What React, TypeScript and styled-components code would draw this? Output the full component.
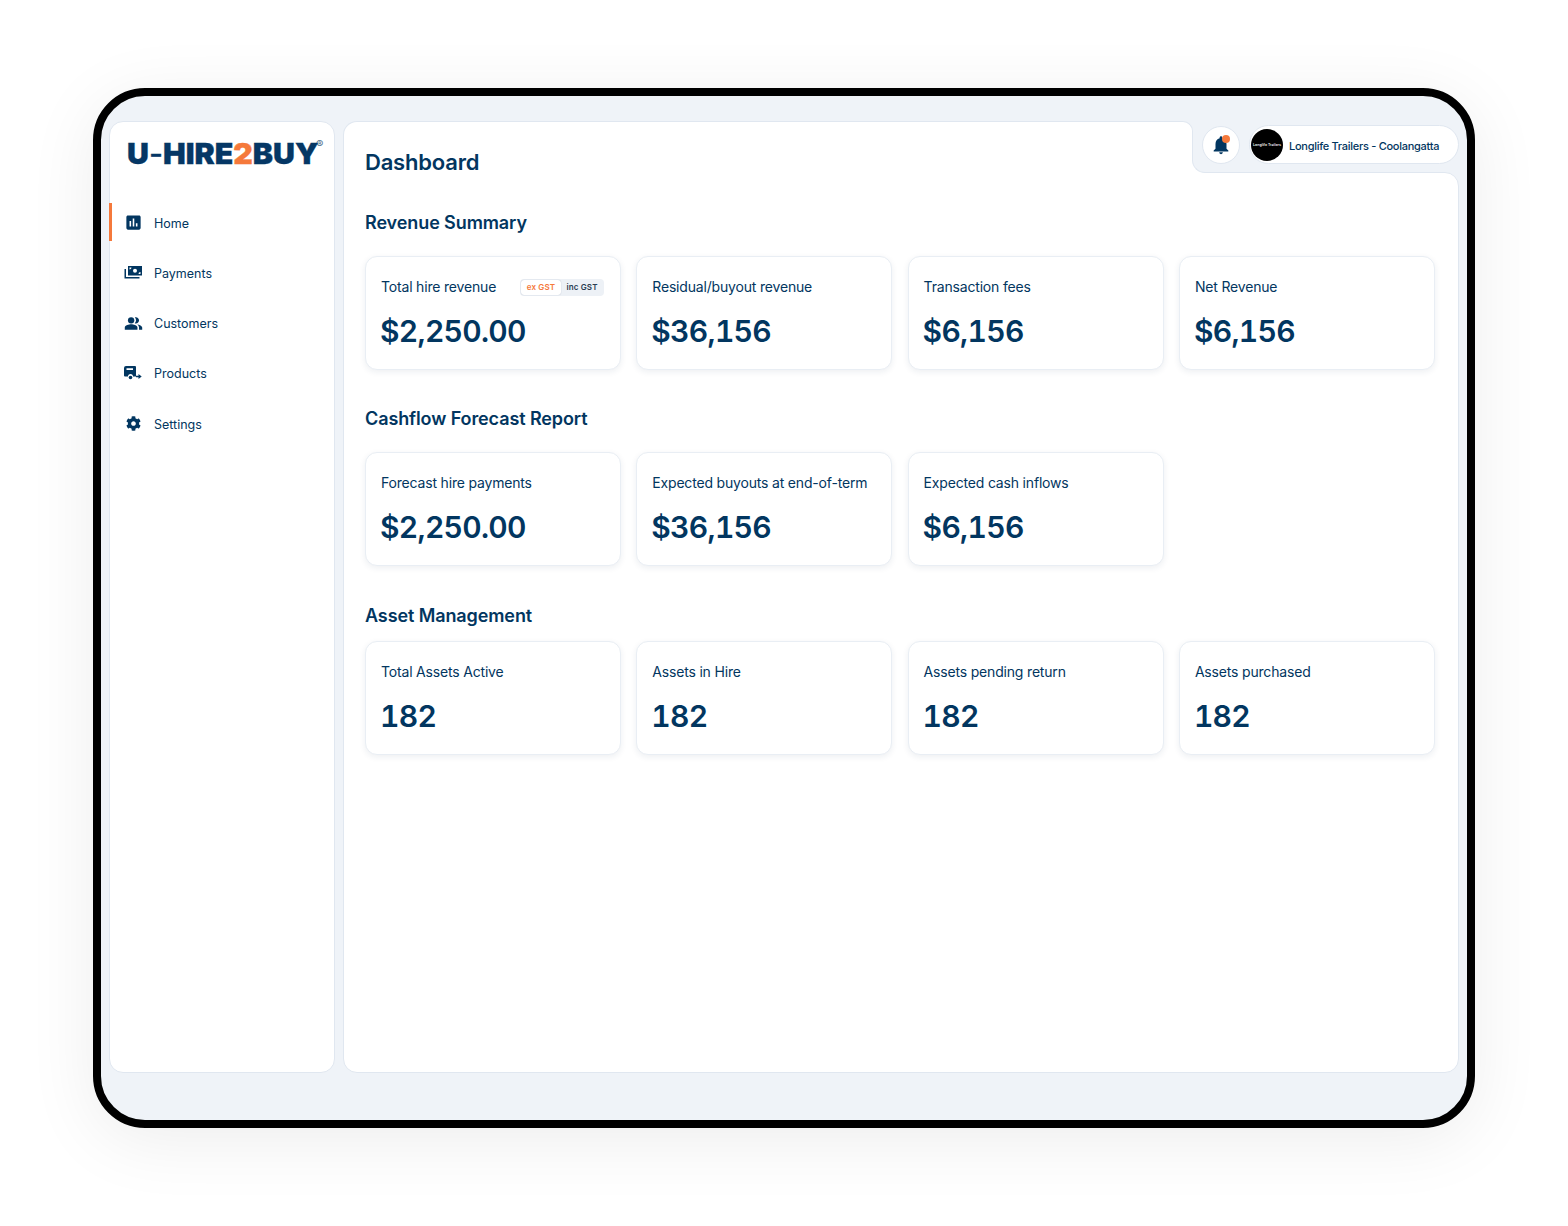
import styled, { createGlobalStyle } from 'styled-components';
import { MdAssessment, MdPeopleAlt, MdNotifications } from 'react-icons/md';
import { FaCog } from 'react-icons/fa';

const navy = '#023660';
const orange = '#f5793b';
const frameBg = '#eff3f8';
const line = '#e0e7f0';

const GlobalStyle = createGlobalStyle`
  html, body { margin: 0; padding: 0; background: #fff; }
  body { font-family: Inter, "Liberation Sans", sans-serif; color: ${navy}; }
  * { box-sizing: border-box; }
`;

const Page = styled.div`
  width: 1568px;
  height: 1226px;
  padding-top: 88px;
  overflow: hidden;
`;

const Frame = styled.div`
  width: 1382px;
  height: 1040px;
  margin: 0 auto;
  border: 8px solid #000;
  border-radius: 52px;
  background: ${frameBg};
  padding: 25px 8px 47px;
  display: flex;
  gap: 8px;
  box-shadow: 0 12px 70px rgba(0, 0, 0, 0.075);
`;

const Sidebar = styled.aside`
  width: 226px;
  background: #fff;
  border: 1px solid ${line};
  border-radius: 14px;
  flex: none;
`;

const Logo = styled.div`
  height: 81px;
  padding: 13px 0 0 17px;
  display: flex;
  align-items: flex-start;
  font-weight: 900;
  font-size: 29px;
  line-height: 38px;
  color: #053765;
  -webkit-text-stroke: 0.3px #053765;
  white-space: nowrap;
`;

const LogoWord = styled.span`
  display: inline-block;
  width: 189px;
  transform: scaleX(1.045);
  transform-origin: left center;
`;

const LogoDash = styled.span`
  font-weight: 500;
`;

const LogoAccent = styled.span`
  color: ${orange};
  -webkit-text-stroke: 0.3px ${orange};
`;

const LogoMark = styled.span`
  font-size: 11px;
  line-height: 12px;
  font-weight: 400;
  margin: 3px 0 0 0;
  color: #4d6f8c;
  -webkit-text-stroke: 0;
`;

const Nav = styled.nav`
  display: flex;
  flex-direction: column;
  gap: 12.3px;
`;

const NavItem = styled.a<{ $active?: boolean }>`
  height: 38px;
  display: flex;
  align-items: center;
  gap: 11px;
  padding: 2px 0 0 11px;
  margin-left: -1px;
  border-left: 3px solid ${(p) => (p.$active ? orange : 'transparent')};
  font-size: 12.5px;
  font-weight: 400;
  color: ${navy};
`;

const NavIcon = styled.span`
  width: 20px;
  height: 20px;
  margin-top: -1px;
  display: flex;
  align-items: center;
  justify-content: center;
  font-size: 19px;
  color: ${navy};
`;

const Main = styled.main`
  flex: 1;
  min-width: 0;
  display: flex;
  flex-direction: column;
`;

const TopRow = styled.div`
  height: 51px;
  display: flex;
  flex: none;
`;

const TitleCell = styled.header`
  width: 850px;
  height: 52px;
  margin-bottom: -1px;
  position: relative;
  z-index: 1;
  background: #fff;
  border: 1px solid ${line};
  border-bottom: 0;
  border-radius: 14px 10px 0 0;
  padding: 27px 0 0 21px;
`;

const PageTitle = styled.h1`
  margin: 0;
  font-size: 22px;
  line-height: 27px;
  font-weight: 600;
  letter-spacing: -0.2px;
`;

const Notch = styled.div`
  flex: 1;
  position: relative;
  z-index: 2;
  display: flex;
  align-items: flex-start;
  gap: 9px;
  padding: 4px 0 0 9px;

  &::before {
    content: '';
    position: absolute;
    left: -1px;
    bottom: -1px;
    width: 14px;
    height: 14px;
    background: #fff;
  }
  &::after {
    content: '';
    position: absolute;
    left: -1px;
    bottom: -1px;
    width: 14px;
    height: 14px;
    background: ${frameBg};
    border-left: 1px solid ${line};
    border-bottom: 1px solid ${line};
    border-bottom-left-radius: 13px;
  }
`;

const BellButton = styled.div`
  width: 38px;
  height: 38px;
  margin-top: 1px;
  border-radius: 50%;
  background: #fff;
  border: 1px solid ${line};
  position: relative;
  display: flex;
  align-items: center;
  justify-content: center;
  font-size: 22px;
  color: ${navy};
  flex: none;
`;

const BellDot = styled.span`
  position: absolute;
  top: 8px;
  right: 9px;
  width: 8px;
  height: 8px;
  border-radius: 50%;
  background: ${orange};
`;

const AccountPill = styled.div`
  flex: 1;
  height: 39px;
  border-radius: 20px;
  background: #fff;
  border: 1px solid ${line};
  display: flex;
  align-items: center;
  gap: 6px;
  padding-left: 1px;
  font-size: 11px;
  font-weight: 500;
  letter-spacing: -0.28px;
  white-space: nowrap;
`;

const AccountName = styled.span`
  padding-top: 2px;
`;

const Avatar = styled.div`
  width: 32px;
  height: 32px;
  border-radius: 50%;
  background: #000;
  color: #e8e8e8;
  display: flex;
  align-items: center;
  justify-content: center;
  font-size: 3.6px;
  font-weight: 600;
  letter-spacing: 0;
  white-space: nowrap;
  overflow: hidden;
  flex: none;
`;

const Content = styled.div`
  flex: 1;
  background: #fff;
  border: 1px solid ${line};
  border-radius: 0 14px 14px 14px;
  padding: 38px 22px 0 21px;
`;

const SectionTitle = styled.h2`
  margin: 0;
  font-size: 18px;
  line-height: 24px;
  font-weight: 600;
  letter-spacing: -0.1px;
`;

const Section = styled.section<{ $gap: number; $after: number }>`
  margin-bottom: ${(p) => p.$after}px;

  ${SectionTitle} {
    margin-bottom: ${(p) => p.$gap}px;
  }
`;

const CardGrid = styled.div`
  display: grid;
  grid-template-columns: repeat(4, 256px);
  column-gap: 15.3px;
`;

const Card = styled.div`
  height: 114px;
  background: #fff;
  border: 1px solid #e9eef4;
  border-radius: 12px;
  box-shadow: 0 2px 6px rgba(20, 50, 90, 0.08);
  padding: 20px 15px 0;
`;

const CardHead = styled.div`
  height: 20px;
  display: flex;
  align-items: center;
  justify-content: space-between;
`;

const CardLabel = styled.div`
  font-size: 14px;
  line-height: 20px;
  font-weight: 400;
  letter-spacing: -0.18px;
  white-space: nowrap;
`;

const CardValue = styled.div`
  margin: 14px 0 0 -1px;
  font-size: 30px;
  line-height: 40px;
  font-weight: 600;
  font-variant-numeric: tabular-nums;
  letter-spacing: -0.7px;
`;

const GstToggle = styled.div`
  width: 84px;
  height: 17px;
  margin-right: 1px;
  background: #edf1f6;
  border-radius: 4px;
  display: flex;
  align-items: stretch;
  padding: 1px;
`;

const GstOption = styled.span<{ $active?: boolean }>`
  flex: ${(p) => (p.$active ? '0 0 40px' : 1)};
  display: flex;
  align-items: center;
  justify-content: center;
  border-radius: 3px;
  background: ${(p) => (p.$active ? '#fff' : 'transparent')};
  box-shadow: ${(p) => (p.$active ? '0 0 1px rgba(20, 50, 90, 0.35)' : 'none')};
  color: ${(p) => (p.$active ? orange : '#2b3d52')};
  font-size: 8px;
  font-weight: 600;
  letter-spacing: 0.15px;
  white-space: nowrap;
`;

const PaymentsIcon = () => (
  <svg width="18" height="13" viewBox="0 0 18 13" fill="currentColor">
    <path d="M4 0h14v9.5H4zM9 4.75a2 2 0 1 0 4 0 2 2 0 0 0-4 0zM5.5 1.5v2a2 2 0 0 0 2-2zM16.5 8v-2a2 2 0 0 0-2 2z" fillRule="evenodd" />
    <path d="M0.5 3h1.5v8h13.5v1.5H0.5z" />
  </svg>
);

const ProductsIcon = () => (
  <svg width="18" height="14" viewBox="0 0 18 14" fill="currentColor">
    <path d="M2 0h9a1 1 0 0 1 1 1v9.5H9a2.5 2.5 0 0 0-5 0H1a1 1 0 0 1-1-1V2a2 2 0 0 1 2-2zM2.5 2.2v1.8h6.5V2.2z" fillRule="evenodd" />
    <circle cx="6.5" cy="11.5" r="1.8" />
    <path d="M12 9.7h2.5V8l3.2 2.5-3.2 2.5v-1.7H12z" />
  </svg>
);

const navItems = [
  { label: 'Home', icon: <MdAssessment />, active: true },
  { label: 'Payments', icon: <PaymentsIcon /> },
  { label: 'Customers', icon: <MdPeopleAlt /> },
  { label: 'Products', icon: <ProductsIcon /> },
  { label: 'Settings', icon: <FaCog size={15} /> },
];

const sections = [
  {
    title: 'Revenue Summary',
    gap: 21,
    after: 37,
    cards: [
      { label: 'Total hire revenue', value: '$2,250.00', gst: true },
      { label: 'Residual/buyout revenue', value: '$36,156' },
      { label: 'Transaction fees', value: '$6,156' },
      { label: 'Net Revenue', value: '$6,156' },
    ],
  },
  {
    title: 'Cashflow Forecast Report',
    gap: 21,
    after: 38,
    cards: [
      { label: 'Forecast hire payments', value: '$2,250.00' },
      { label: 'Expected buyouts at end-of-term', value: '$36,156' },
      { label: 'Expected cash inflows', value: '$6,156' },
    ],
  },
  {
    title: 'Asset Management',
    gap: 13,
    after: 0,
    cards: [
      { label: 'Total Assets Active', value: '182' },
      { label: 'Assets in Hire', value: '182' },
      { label: 'Assets pending return', value: '182' },
      { label: 'Assets purchased', value: '182' },
    ],
  },
];

const App = () => {
  return (
    <>
      <GlobalStyle />
      <Page>
        <Frame>
          <Sidebar>
            <Logo>
              <LogoWord>
                U<LogoDash>-</LogoDash>HIRE<LogoAccent>2</LogoAccent>BUY
              </LogoWord>
              <LogoMark>®</LogoMark>
            </Logo>
            <Nav>
              {navItems.map((item) => (
                <NavItem key={item.label} $active={item.active}>
                  <NavIcon>{item.icon}</NavIcon>
                  {item.label}
                </NavItem>
              ))}
            </Nav>
          </Sidebar>
          <Main>
            <TopRow>
              <TitleCell>
                <PageTitle>Dashboard</PageTitle>
              </TitleCell>
              <Notch>
                <BellButton>
                  <MdNotifications />
                  <BellDot />
                </BellButton>
                <AccountPill>
                  <Avatar>Longlife Trailers</Avatar>
                  <AccountName>Longlife Trailers - Coolangatta</AccountName>
                </AccountPill>
              </Notch>
            </TopRow>
            <Content>
              {sections.map((section) => (
                <Section key={section.title} $gap={section.gap} $after={section.after}>
                  <SectionTitle>{section.title}</SectionTitle>
                  <CardGrid>
                    {section.cards.map((card) => (
                      <Card key={card.label}>
                        <CardHead>
                          <CardLabel>{card.label}</CardLabel>
                          {card.gst && (
                            <GstToggle>
                              <GstOption $active>ex GST</GstOption>
                              <GstOption>inc GST</GstOption>
                            </GstToggle>
                          )}
                        </CardHead>
                        <CardValue>{card.value}</CardValue>
                      </Card>
                    ))}
                  </CardGrid>
                </Section>
              ))}
            </Content>
          </Main>
        </Frame>
      </Page>
    </>
  );
};

export default App;
